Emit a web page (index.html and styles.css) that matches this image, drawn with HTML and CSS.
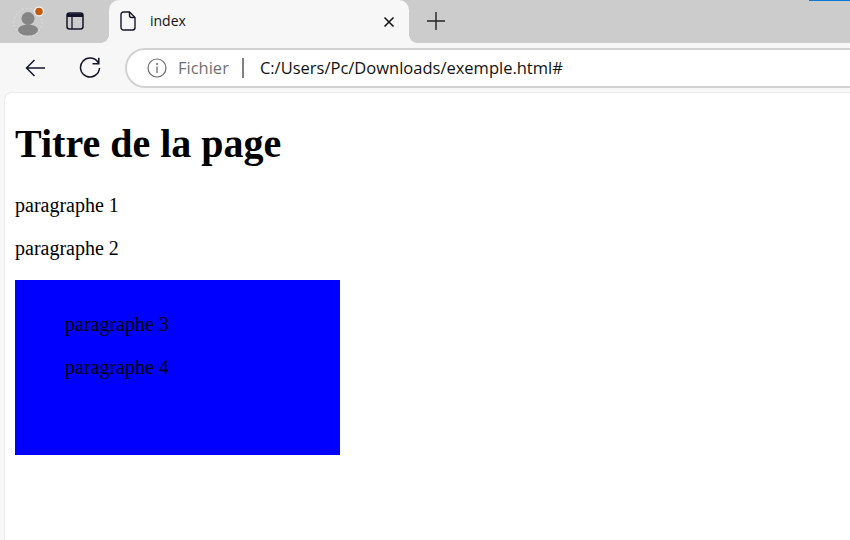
FILE: index.html
```html
<!DOCTYPE html>
<html lang="fr">
<head>
<meta charset="utf-8">
<title>index</title>
<link rel="stylesheet" href="styles.css">
</head>
<body>
<div class="tabstrip">
  <div class="accent"></div>
  <div class="profile">
    <svg width="34" height="34" viewBox="0 0 34 34">
      <circle cx="17" cy="17.500" r="14" fill="none" stroke="#ececec" stroke-width="1" stroke-dasharray="1 3"/>
      <circle cx="17" cy="13.500" r="6.500" fill="#858585"/>
      <ellipse cx="17" cy="25" rx="10" ry="5.500" fill="#858585"/>
      <circle cx="28" cy="6.500" r="5" fill="#f4f4f4"/>
      <circle cx="28" cy="6.500" r="3.800" fill="#c05a0c"/>
    </svg>
  </div>
  <div class="tabs-btn">
    <svg width="18" height="18" viewBox="0 0 18 18">
      <rect x="1" y="1" width="16" height="16" rx="2.500" fill="none" stroke="#14142a" stroke-width="1.500"/>
      <path d="M1 1.500h16v3.500H1z" fill="#14142a"/>
      <path d="M6 5v12" stroke="#14142a" stroke-width="1.300"/>
    </svg>
  </div>
  <div class="tab">
    <svg class="file-icon" width="16" height="20" viewBox="0 0 16 20">
      <path d="M3.500 1h6L15 6.500V16.500a2.500 2.500 0 0 1-2.500 2.500h-9A2.500 2.500 0 0 1 1 16.500V3.500A2.500 2.500 0 0 1 3.500 1z" fill="none" stroke="#14142a" stroke-width="1.400"/>
      <path d="M9.500 1v3.500a2 2 0 0 0 2 2H15" fill="none" stroke="#14142a" stroke-width="1.400"/>
    </svg>
    <span class="tab-title">index</span>
    <svg class="tab-close" width="12" height="12" viewBox="0 0 12 12">
      <path d="M1.500 1.500l9 9M10.500 1.500l-9 9" stroke="#111" stroke-width="1.500"/>
    </svg>
  </div>
  <div class="new-tab">
    <svg width="18" height="18" viewBox="0 0 18 18">
      <path d="M9 0v18M0 9h18" stroke="#222" stroke-width="1.400"/>
    </svg>
  </div>
</div>
<div class="toolbar">
  <div class="nav-btn back">
    <svg width="20" height="18" viewBox="0 0 20 18">
      <path d="M20 9H1.500M9.500 1L1.500 9l8 8" fill="none" stroke="#14142a" stroke-width="1.500"/>
    </svg>
  </div>
  <div class="nav-btn reload">
    <svg width="22" height="22" viewBox="0 0 22 22">
      <path d="M19.300 5.800A9.500 9.500 0 1 0 20.500 11" fill="none" stroke="#14142a" stroke-width="1.500"/>
      <path d="M13.500 6.700h6.300V0.700" fill="none" stroke="#14142a" stroke-width="1.500"/>
    </svg>
  </div>
  <div class="address">
    <svg class="info" width="20" height="20" viewBox="0 0 20 20">
      <circle cx="10" cy="10" r="9" fill="none" stroke="#6b6b6b" stroke-width="1.200"/>
      <circle cx="10" cy="6" r="1" fill="#6b6b6b"/>
      <path d="M10 8.500v6.500" stroke="#6b6b6b" stroke-width="1.300"/>
    </svg>
    <span class="scheme">Fichier</span>
    <span class="sep"></span>
    <span class="url">C:/Users/Pc/Downloads/exemple.html#</span>
  </div>
</div>
<main class="page">
  <h1>Titre de la page</h1>
  <p>paragraphe 1</p>
  <p>paragraphe 2</p>
  <div class="blue">
    <p>paragraphe 3</p>
    <p>paragraphe 4</p>
  </div>
</main>
</body>
</html>
```

FILE: styles.css
```css
* { box-sizing: border-box; }
html, body { margin: 0; height: 100%; }
body {
  width: 850px;
  height: 540px;
  overflow: hidden;
  background: #f7f7f7;
  display: flex;
  flex-direction: column;
  position: relative;
}
.tabstrip {
  height: 43px;
  background: #cccccc;
  display: flex;
  align-items: center;
  flex: none;
}
.accent {
  position: absolute;
  top: 0;
  right: 0;
  width: 41px;
  height: 1px;
  background: #0f78d4;
}
.profile { width: 34px; height: 34px; margin-left: 11px; flex: none; }
.profile svg { display: block; }
.tabs-btn { width: 18px; height: 18px; margin-left: 21px; margin-bottom: 1px; flex: none; }
.tabs-btn svg, .new-tab svg, .nav-btn svg { display: block; }
.tab {
  width: 300px;
  height: 43px;
  margin-left: 25px;
  background: #f7f7f7;
  border-radius: 10px 10px 0 0;
  display: flex;
  align-items: center;
  padding: 0 14px 0 11px;
  flex: none;
  position: relative;
}
.tab::before, .tab::after {
  content: "";
  position: absolute;
  bottom: 0;
  width: 8px;
  height: 8px;
}
.tab::before {
  left: -8px;
  background: radial-gradient(circle at 0 0, #cccccc 7.500px, #f7f7f7 8px);
}
.tab::after {
  right: -8px;
  background: radial-gradient(circle at 100% 0, #cccccc 7.500px, #f7f7f7 8px);
}
.file-icon { flex: none; margin-bottom: 1px; }
.tab-title {
  font: 14px "Open Sans", "Noto Sans", sans-serif;
  color: #111;
  margin-left: 14px;
  margin-bottom: 2px;
  flex: 1;
}
.tab-close { flex: none; }
.new-tab { margin-left: 18px; margin-bottom: 2px; width: 18px; height: 18px; flex: none; }
.toolbar {
  height: 49px;
  padding-top: 1px;
  flex: none;
  display: flex;
  align-items: center;
}
.nav-btn { flex: none; }
.back { margin-left: 25px; }
.reload { margin-left: 34px; }
.address {
  margin-left: 24px;
  flex: none;
  width: 760px;
  height: 40px;
  background: #fff;
  border: 2px solid #d2d2d2;
  border-right: none;
  border-radius: 20px 0 0 20px;
  display: flex;
  align-items: center;
  padding-left: 20px;
}
.info { flex: none; }
.scheme {
  font: 16.500px "Open Sans", "Noto Sans", sans-serif;
  color: #6f6f6f;
  margin-left: 11px;
  margin-bottom: 2px;
}
.sep { width: 2px; height: 20px; background: #808080; margin-left: 13px; flex: none; }
.url {
  font: 16.500px "Open Sans", "Noto Sans", sans-serif;
  color: #111;
  margin-left: 16px;
  margin-bottom: 2px;
  white-space: nowrap;
}
.page {
  flex: 1;
  margin-left: 4px;
  background: #fff;
  border-top: 1px solid #ececec;
  border-left: 1px solid #ececec;
  border-top-left-radius: 8px;
  padding-left: 10px;
  font-family: "Liberation Serif", serif;
  font-size: 20px;
  color: #000;
}
h1 {
  font-size: 40px;
  font-weight: bold;
  margin: 28px 0 27px;
  line-height: 46px;
}
p { margin: 0 0 20px; line-height: 23px; }
.blue {
  width: 325px;
  height: 175px;
  background: #0000ff;
  padding: 33px 0 0 50px;
}
```
